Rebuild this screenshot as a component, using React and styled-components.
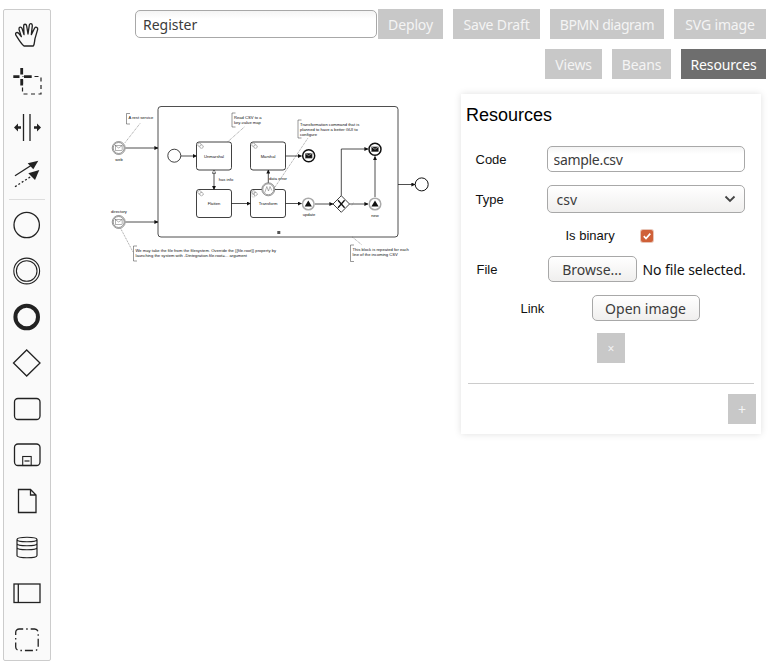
import React from "react";
import styled, { createGlobalStyle } from "styled-components";

const GlobalStyle = createGlobalStyle`
  html, body {
    margin: 0;
    padding: 0;
    background: #fff;
    font-family: "Liberation Sans", Arial, sans-serif;
  }
`;

const UI_FONT = `"Noto Sans", "Open Sans", sans-serif`;

const Line = (props) => <path fill="none" stroke="#222" strokeWidth="2" {...props} />;

// palette drawings use a 46x46 box centred on the entry
const paletteIcons = [
  {
    name: "hand",
    draw: (
      <svg viewBox="12 36 138 138" width="46" height="46">
        <path
          fill="none"
          stroke="#222"
          strokeWidth="4"
          strokeLinejoin="round"
          d="M72 138 C62 130 54 115 47 104 C45 98 52 95 56 100 L64 110 L57 88 C56 81 63 79 66 85 L72 104 L71 78 C71 71 79 71 80 78 L84 102 L88 75 C89 69 97 70 97 77 L94 104 L104 84 C107 79 114 82 113 88 L105 116 C103 126 104 132 100 138 Z"
        />
      </svg>
    ),
  },
  {
    name: "lasso",
    draw: (
      <svg viewBox="0 0 46 46" width="46" height="46">
        <path stroke="#222" strokeWidth="2.800" d="M17.700 10v6.500M17.700 21v6.500M9.300 18.700h6.200M20 18.700h7.700" />
        <rect x="18.500" y="18.500" width="18.500" height="17.500" fill="none" stroke="#222" strokeWidth="1.200" strokeDasharray="4 3.500" strokeDashoffset="-12" />
      </svg>
    ),
  },
  {
    name: "space",
    draw: (
      <svg viewBox="0 0 46 46" width="46" height="46">
        <Line strokeWidth="1.300" d="M19.500 10v27M26 10v27" />
        <path fill="#222" d="M10 23.500l4-4v2.800h3v2.400h-3v2.800zM37 23.500l-4-4v2.800h-3v2.400h3v2.800z" />
      </svg>
    ),
  },
  {
    name: "connect",
    draw: (
      <svg viewBox="0 0 46 46" width="46" height="46">
        <Line strokeWidth="1.300" d="M11 25.700L27 15.500" />
        <path fill="#222" d="M34.300 10.700L29.300 19.300 23.700 13.300z" />
        <Line strokeWidth="1.300" strokeDasharray="2 2" d="M11 36.700L27 26.500" />
        <path fill="#222" d="M35.300 20L31 30 24.300 23.300z" />
      </svg>
    ),
  },
  { separator: true, name: "sep" },
  {
    name: "start",
    draw: (
      <svg viewBox="0 0 46 46" width="46" height="46">
        <circle cx="22.700" cy="23" r="12.700" fill="none" stroke="#222" strokeWidth="1.300" />
      </svg>
    ),
  },
  {
    name: "intermediate",
    draw: (
      <svg viewBox="0 0 46 46" width="46" height="46">
        <circle cx="22.700" cy="23" r="12.900" fill="none" stroke="#222" strokeWidth="1.100" />
        <circle cx="22.700" cy="23" r="10.300" fill="none" stroke="#222" strokeWidth="1.100" />
      </svg>
    ),
  },
  {
    name: "end",
    draw: (
      <svg viewBox="0 0 46 46" width="46" height="46">
        <circle cx="22.700" cy="23" r="11.300" fill="none" stroke="#222" strokeWidth="4" />
      </svg>
    ),
  },
  {
    name: "gateway",
    draw: (
      <svg viewBox="0 0 46 46" width="46" height="46">
        <path fill="none" stroke="#222" strokeWidth="1.300" d="M22.700 10L36 23 22.700 36 9.500 23z" />
      </svg>
    ),
  },
  {
    name: "task",
    draw: (
      <svg viewBox="0 0 46 46" width="46" height="46">
        <rect x="10.500" y="12.500" width="25.500" height="21" rx="3.500" fill="none" stroke="#222" strokeWidth="1.300" />
      </svg>
    ),
  },
  {
    name: "subprocess",
    draw: (
      <svg viewBox="0 0 46 46" width="46" height="46">
        <rect x="10.500" y="12" width="25.500" height="21.500" rx="3.500" fill="none" stroke="#222" strokeWidth="1.300" />
        <rect x="18.700" y="24.500" width="8.500" height="9" fill="none" stroke="#222" strokeWidth="1.100" />
        <path stroke="#222" strokeWidth="1.200" d="M20.500 29h5" />
      </svg>
    ),
  },
  {
    name: "dataObject",
    draw: (
      <svg viewBox="0 0 46 46" width="46" height="46">
        <path fill="none" stroke="#222" strokeWidth="1.300" d="M14.500 11.500H26.500L32 17V34.500H14.500zM26.500 11.500V17H32" />
      </svg>
    ),
  },
  {
    name: "dataStore",
    draw: (
      <svg viewBox="0 0 46 46" width="46" height="46">
        <path
          fill="none"
          stroke="#222"
          strokeWidth="1.200"
          d="M13 15.500C13 12.500 33 12.500 33 15.500V31.500C33 34.500 13 34.500 13 31.500zM13 15.500C13 18.500 33 18.500 33 15.500M13 19.500C13 22.500 33 22.500 33 19.500M13 23.500C13 26.500 33 26.500 33 23.500"
        />
      </svg>
    ),
  },
  {
    name: "participant",
    draw: (
      <svg viewBox="0 0 46 46" width="46" height="46">
        <rect x="10" y="14" width="26" height="18.500" fill="none" stroke="#222" strokeWidth="1.300" />
        <path stroke="#222" strokeWidth="1.300" d="M14.300 14v18.500" />
      </svg>
    ),
  },
  {
    name: "group",
    draw: (
      <svg viewBox="0 0 46 46" width="46" height="46">
        <rect x="11.700" y="13" width="22.500" height="21.500" rx="3.500" fill="none" stroke="#222" strokeWidth="1.300" strokeDasharray="8 3 1.500 3" strokeDashoffset="4" />
      </svg>
    ),
  },
];

const tasks = [
  { label: "Unmarshal", x: 196.5, y: 142 },
  { label: "Flatten", x: 196.5, y: 189.5 },
  { label: "Marshal", x: 250.5, y: 142 },
  { label: "Transform", x: 250.5, y: 189.5 },
];

const flows = [
  "M125.500 148H158",
  "M125.500 222H158",
  "M181 156H196.500",
  "M214 173V189.500",
  "M214 171.500V170",
  "M217.500 203.500H250.500",
  "M268.300 183V170",
  "M285.500 156H301.500",
  "M285.500 203.500H301.500",
  "M315 204H333",
  "M349.500 204H368",
  "M341.300 195.700V149H368",
  "M375 197V156.500",
  "M398 184.500H415",
];

const dotted = [
  "M125 142.700L140 123.500",
  "M227.500 142L244.300 127",
  "M120.700 228.500L133 252",
  "M275 187L308 138",
  "M352.300 237L362 245",
];

const notes = [
  { x: 126.5, y: 113.5, h: 10.5, lines: ["A rest service"] },
  { x: 232, y: 113, h: 14, lines: ["Read CSV to a", "key-value map"] },
  { x: 298, y: 120, h: 18, lines: ["Transformation command that is", "planned to have a better GUI to", "configure"] },
  {
    x: 133.5,
    y: 246,
    h: 15,
    lines: [
      "We may take the file from the filesystem. Override the {{file.root}} property by",
      "launching the system with -Dintegration.file.root=... argument",
    ],
  },
  { x: 350.5, y: 245, h: 16.5, lines: ["This block is repeated for each", "line of the incoming CSV"] },
];

const labels = [
  { text: "web", x: 119, y: 161 },
  { text: "directory", x: 119, y: 213 },
  { text: "has info", x: 226, y: 181 },
  { text: "data error", x: 278, y: 180 },
  { text: "update", x: 309, y: 216 },
  { text: "new", x: 375, y: 217 },
];

const Envelope = ({ cx, cy, filled }) => (
  <g>
    <rect
      x={cx - 3.4}
      y={cy - 2.4}
      width="6.800"
      height="4.800"
      fill={filled ? "#111" : "#fff"}
      stroke="#666"
      strokeWidth="0.500"
    />
    <path d={`M${cx - 3.4} ${cy - 2.4}L${cx} ${cy}L${cx + 3.4} ${cy - 2.4}`} fill="none" stroke={filled ? "#fff" : "#666"} strokeWidth="0.500" />
  </g>
);

const CatchEvent = ({ cx, cy, children }) => (
  <g>
    <circle cx={cx} cy={cy} r="6.500" fill="#fff" stroke="#333" strokeWidth="0.500" />
    <circle cx={cx} cy={cy} r="5.500" fill="#fff" stroke="#333" strokeWidth="0.500" />
    {children}
  </g>
);

const SignalEvent = ({ cx, cy }) => (
  <g>
    <circle cx={cx} cy={cy} r="5.800" fill="#fff" stroke="#aaa" strokeWidth="1.500" />
    <path d={`M${cx} ${cy - 3.5}L${cx + 3.6} ${cy + 2.4}H${cx - 3.6}z`} fill="#111" />
  </g>
);

const Gear = ({ x, y }) => (
  <g fill="#fff" stroke="#777" strokeWidth="0.800">
    <circle cx={x} cy={y} r="1.700" strokeDasharray="0.900 0.400" />
    <circle cx={x + 2} cy={y + 1.800} r="1.700" strokeDasharray="0.900 0.400" />
  </g>
);

const Diagram = () => (
  <DiagramSvg viewBox="51 94 410 180" width="410" height="180">
    <defs>
      <marker id="arrow" markerWidth="4" markerHeight="4" refX="3.600" refY="2" orient="auto" markerUnits="userSpaceOnUse">
        <path d="M0 0L4 2L0 4z" fill="#111" />
      </marker>
    </defs>

    <rect x="158" y="106.500" width="240" height="130.500" rx="3" fill="#fff" stroke="#222" strokeWidth="0.800" />

    {dotted.map((d) => (
      <path key={d} d={d} fill="none" stroke="#444" strokeWidth="0.500" strokeDasharray="1 0.800" />
    ))}

    {flows.map((d) => (
      <path key={d} d={d} fill="none" stroke="#222" strokeWidth="0.800" markerEnd="url(#arrow)" />
    ))}

    {tasks.map((t) => (
      <g key={t.label}>
        <rect x={t.x} y={t.y} width="35" height="28" rx="2.500" fill="#fff" stroke="#111" strokeWidth="0.800" />
        <Gear x={t.x + 3} y={t.y + 2.8} />
        <NodeText x={t.x + 17.5} y={t.y + 15.5} textAnchor="middle">
          {t.label}
        </NodeText>
      </g>
    ))}

    <rect x="252" y="192" width="2.500" height="5" fill="none" stroke="#777" strokeWidth="0.400" strokeDasharray="0.700 0.500" />
    <circle cx="214" cy="172" r="1.200" fill="#fff" stroke="#555" strokeWidth="0.400" />
    <path d="M351.800 205.500L353.500 202.500" stroke="#777" strokeWidth="0.400" />

    <circle cx="174.300" cy="155.700" r="6.500" fill="#fff" stroke="#111" strokeWidth="0.800" />
    <circle cx="421.700" cy="184.400" r="6.500" fill="#fff" stroke="#111" strokeWidth="1" />

    <CatchEvent cx={118.7} cy={148}>
      <Envelope cx={118.7} cy={148} />
    </CatchEvent>
    <CatchEvent cx={118.7} cy={222}>
      <Envelope cx={118.7} cy={222} />
    </CatchEvent>
    <CatchEvent cx={268.3} cy={189.3}>
      <path d="M264.800 192.500L266.800 186.500L268.500 191L270 186.500L271.800 190.500" fill="none" stroke="#666" strokeWidth="0.500" />
    </CatchEvent>

    <circle cx="308.700" cy="155.700" r="6" fill="#fff" stroke="#111" strokeWidth="1.500" />
    <Envelope cx={308.7} cy={155.7} filled />
    <circle cx="375" cy="149.300" r="6" fill="#fff" stroke="#111" strokeWidth="1.500" />
    <Envelope cx={375} cy={149.3} filled />

    <SignalEvent cx={308.3} cy={204} />
    <SignalEvent cx={375} cy={204} />

    <path d="M341.300 195.700L349.500 204L341.300 212.300L333 204z" fill="#fff" stroke="#111" strokeWidth="0.800" />
    <path d="M338 200.300L344.600 207.700M344.600 200.300L338 207.700" stroke="#111" strokeWidth="1.300" />

    <rect x="277.300" y="231" width="3" height="3" fill="#555" />

    {notes.map((n) => (
      <g key={n.lines[0]}>
        <path d={`M${n.x + 3.5} ${n.y}H${n.x}V${n.y + n.h}H${n.x + 3.5}`} fill="none" stroke="#333" strokeWidth="0.500" />
        {n.lines.map((line, i) => (
          <NodeText key={line} x={n.x + 2} y={n.y + 5.5 + i * 5}>
            {line}
          </NodeText>
        ))}
      </g>
    ))}

    {labels.map((l) => (
      <NodeText key={l.text} x={l.x} y={l.y} textAnchor="middle">
        {l.text}
      </NodeText>
    ))}
  </DiagramSvg>
);

const App = () => {
  return (
    <Page>
      <GlobalStyle />
      <Palette>
        {paletteIcons.map((icon) =>
          icon.separator ? <PaletteSeparator key={icon.name} /> : <PaletteEntry key={icon.name}>{icon.draw}</PaletteEntry>
        )}
      </Palette>
      <Main>
        <ActionBar>
          <NameInput defaultValue="Register" />
          <ActionButton $w={65}>Deploy</ActionButton>
          <ActionButton $w={87}>Save Draft</ActionButton>
          <ActionButton $w={114} $track={-0.45}>BPMN diagram</ActionButton>
          <ActionButton $w={92}>SVG image</ActionButton>
        </ActionBar>
        <TabBar>
          <ActionButton $w={57}>Views</ActionButton>
          <ActionButton $w={59}>Beans</ActionButton>
          <ActionButton $w={85} $active>Resources</ActionButton>
        </TabBar>
        <Workspace>
          <Diagram />
          <Panel>
            <PanelTitle>Resources</PanelTitle>
            <FieldRow $top={20}>
              <Label>Code</Label>
              <TextField defaultValue="sample.csv" />
            </FieldRow>
            <FieldRow $top={13}>
              <Label>Type</Label>
              <SelectBox>
                <span>csv</span>
                <svg viewBox="0 0 12 8" width="12" height="8">
                  <path d="M1.500 1.500L6 6l4.500-4.500" fill="none" stroke="#444" strokeWidth="1.800" />
                </svg>
              </SelectBox>
            </FieldRow>
            <FieldRow $top={15}>
              <Label $wide>Is binary</Label>
              <CheckMark>
                <svg viewBox="0 0 12 12" width="12" height="12">
                  <path d="M2.800 6.200L5 8.500L9.300 3.600" fill="none" stroke="#fff" strokeWidth="1.700" />
                </svg>
              </CheckMark>
            </FieldRow>
            <FieldRow $top={13}>
              <Label>File</Label>
              <FormButton>Browse...</FormButton>
              <FileName>No file selected.</FileName>
            </FieldRow>
            <FieldRow $top={13}>
              <Label>Link</Label>
              <FormButton $wide>Open image</FormButton>
            </FieldRow>
            <Row $top={12}>
              <SmallButton>×</SmallButton>
            </Row>
            <Divider />
            <AddRow>
              <SmallButton $large>+</SmallButton>
            </AddRow>
          </Panel>
        </Workspace>
      </Main>
    </Page>
  );
};

const Page = styled.div`
  display: flex;
  align-items: flex-start;
  width: 773px;
  height: 667px;
  overflow: hidden;
  box-sizing: border-box;
  padding: 9px 0 0 3px;
`;

const Palette = styled.aside`
  flex: none;
  box-sizing: border-box;
  width: 48px;
  height: 652px;
  padding-top: 2px;
  background: #fafafa;
  border: 1px solid #ccc;
  border-radius: 2px;
`;

const PaletteEntry = styled.div`
  display: flex;
  justify-content: center;
  height: 46px;

  svg {
    display: block;
  }
`;

const PaletteSeparator = styled.div`
  margin: 3px 5px 2px;
  border-top: 1px solid #ddd;
`;

const Main = styled.main`
  flex: 1;
  min-width: 0;
  padding-right: 7px;
`;

const ActionBar = styled.div`
  display: flex;
  justify-content: flex-end;
  align-items: center;
  gap: 10px;
  height: 30px;
`;

const TabBar = styled(ActionBar)`
  margin-top: 10px;
`;

const ActionButton = styled.button`
  box-sizing: border-box;
  flex: none;
  width: ${(p) => p.$w}px;
  height: 30px;
  padding: 0;
  border: 0;
  background: ${(p) => (p.$active ? "#6e6e6e" : "#c8c8c8")};
  color: ${(p) => (p.$active ? "#fff" : "#f4f4f4")};
  font-family: ${UI_FONT};
  font-size: 14px;
  letter-spacing: ${(p) => p.$track ?? -0.15}px;
  white-space: nowrap;
`;

const fieldLook = `
  box-sizing: border-box;
  border: 1px solid #a8a8a8;
  border-radius: 5px;
  background: linear-gradient(#f4f4f4, #ffffff 30%);
  color: #3c3c3c;
  font-family: ${UI_FONT};
  font-size: 14px;
  outline: none;
`;

const NameInput = styled.input`
  ${fieldLook}
  width: 242px;
  height: 28px;
  margin-right: -9px;
  padding: 0 7px;
`;

const Workspace = styled.div`
  display: flex;
  align-items: flex-start;
  justify-content: space-between;
  margin-top: 15px;
  padding-right: 5px;
`;

const DiagramSvg = styled.svg`
  flex: none;
  display: block;
`;

const NodeText = styled.text`
  font-family: "Liberation Sans", Arial, sans-serif;
  font-size: 4.150px;
  fill: #111;
`;

const Panel = styled.section`
  flex: none;
  box-sizing: border-box;
  width: 300px;
  height: 340px;
  padding: 11px 5px 10px;
  background: #fff;
  box-shadow: 0 0 7px rgba(0, 0, 0, 0.13);
`;

const PanelTitle = styled.h2`
  margin: 0;
  font-size: 18px;
  line-height: 21px;
  font-weight: 400;
  color: #000;
`;

const Row = styled.div`
  display: flex;
  justify-content: center;
  align-items: center;
  margin-top: ${(p) => p.$top}px;
`;

const FieldRow = styled(Row)`
  padding-right: 2px;
`;

const Label = styled.label`
  flex: none;
  width: ${(p) => (p.$wide ? 75 : 71)}px;
  font-size: 13px;
  color: #111;
`;

const TextField = styled.input`
  ${fieldLook}
  width: 198px;
  height: 26px;
  padding: 0 6px;
  letter-spacing: -0.3px;
`;

const SelectBox = styled.div`
  ${fieldLook}
  display: flex;
  align-items: center;
  justify-content: space-between;
  width: 198px;
  height: 28px;
  padding: 0 8px 0 9px;
  background: linear-gradient(#ffffff, #f0efee);
`;

const CheckMark = styled.span`
  display: flex;
  align-items: center;
  justify-content: center;
  width: 12px;
  height: 12px;
  margin-right: 2px;
  border-radius: 2px;
  background: #cf6038;
  box-shadow: 0 0 0 1px rgba(190, 90, 50, 0.35);
`;

const FormButton = styled.button`
  ${fieldLook}
  flex: none;
  width: ${(p) => (p.$wide ? 108 : 89)}px;
  height: 26px;
  padding: 0;
  background: linear-gradient(#ffffff, #f0efee);
`;

const FileName = styled.span`
  flex: none;
  width: 101px;
  margin-left: 6px;
  font-family: ${UI_FONT};
  font-size: 14px;
  letter-spacing: -0.08px;
  color: #111;
  white-space: nowrap;
`;

const SmallButton = styled.button`
  width: 28px;
  height: 30px;
  padding: 0;
  border: 0;
  background: #c8c8c8;
  color: #f4f4f4;
  font-family: ${UI_FONT};
  font-size: ${(p) => (p.$large ? 14 : 12)}px;
`;

const Divider = styled.hr`
  margin: 20px 2px 0;
  border: 0;
  border-top: 1px solid #ccc;
`;

const AddRow = styled.div`
  display: flex;
  justify-content: flex-end;
  margin-top: 10px;
`;

export default App;
